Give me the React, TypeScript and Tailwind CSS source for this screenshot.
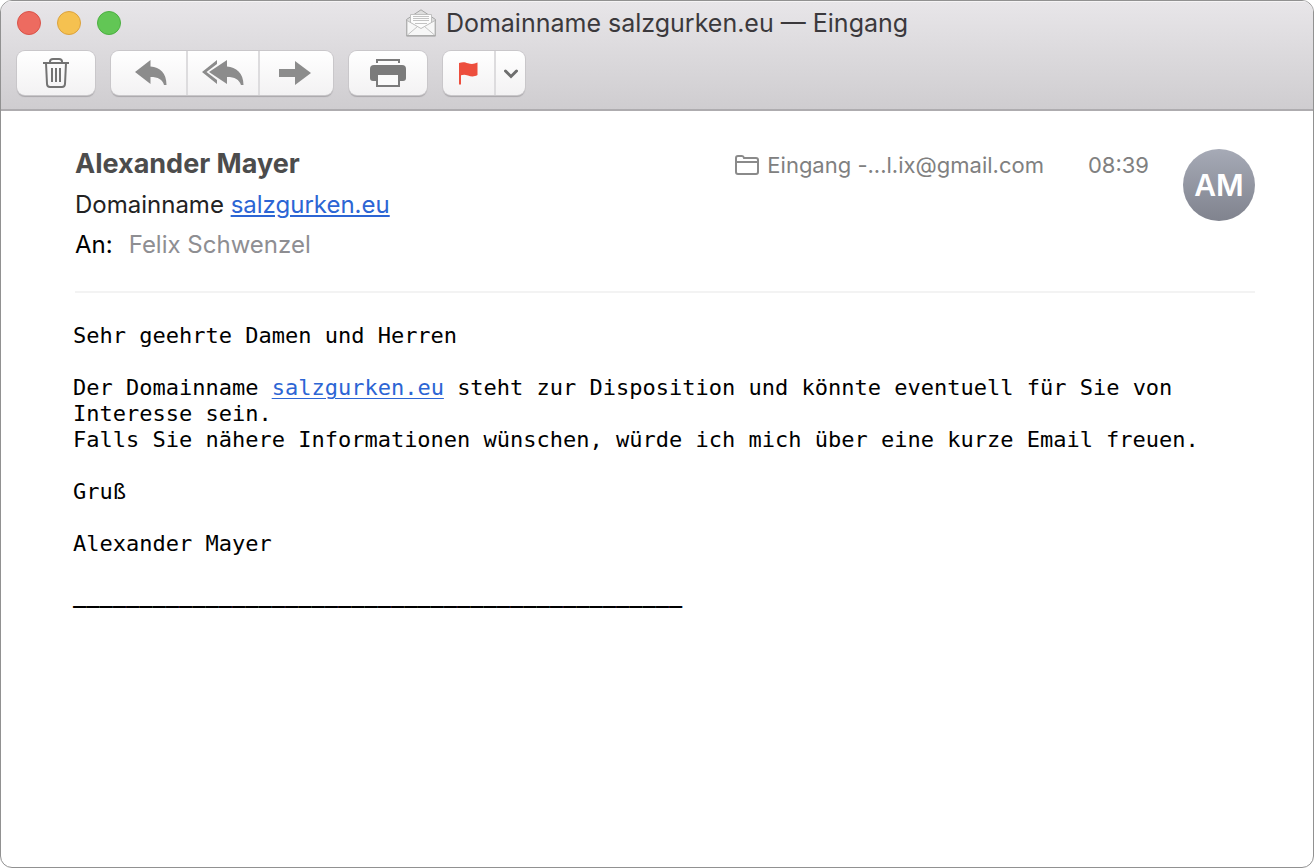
import type { ReactNode } from "react";

const toolButton =
  "flex h-11 items-center justify-center bg-linear-to-b from-white to-[#f3f2f3] active:from-[#e6e5e6] active:to-[#dddcdd]";

function ButtonGroup({ children }: { children: ReactNode }) {
  return (
    <div className="flex divide-x-2 divide-[#dddcde] overflow-hidden rounded-lg shadow-[0_0_0_1px_#c9c7ca,0_2px_1px_#a9a7aa]">
      {children}
    </div>
  );
}

function TrashIcon() {
  return (
    <svg width="28" height="32" viewBox="0 0 28 32" fill="none" stroke="#737373" strokeWidth="2" aria-hidden="true">
      <path d="M1 6H27" />
      <path d="M8 5V4.500Q8 2 11 2H17Q20 2 20 4.500V5" />
      <path d="M4 6L5 27Q5.200 30 8 30H20Q22.800 30 23 27L24 6" />
      <path d="M10 11V25M14 11V25M18 11V25" />
    </svg>
  );
}

function ReplyIcon() {
  return (
    <svg width="32" height="26" viewBox="0 0 32 26" fill="#8c8c8c" aria-hidden="true">
      <path d="M0 12L15.500 0V6.500C25 7 31.500 13 31.500 25H29C27.500 19.500 23 17 15.500 17V24Z" />
    </svg>
  );
}

function ReplyAllIcon() {
  return (
    <svg width="42" height="26" viewBox="0 0 42 26" fill="#8c8c8c" aria-hidden="true">
      <path d="M0 12L15 0V4L4.500 12L15 20V24Z" />
      <path d="M7 12L25 0V6.500C34 7 41.500 13 41.500 25H39C37 19.500 33 17 25 17V24Z" />
    </svg>
  );
}

function ForwardIcon() {
  return (
    <svg width="32" height="24" viewBox="0 0 32 24" fill="#8c8c8c" aria-hidden="true">
      <path d="M0 8H16V0L32 12L16 24V16H0Z" />
    </svg>
  );
}

function PrintIcon() {
  return (
    <svg width="36" height="28" viewBox="0 0 36 28" aria-hidden="true">
      <path d="M7 4V1H29V4" fill="none" stroke="#7b7b7b" strokeWidth="2" />
      <path d="M4 6H32Q36 6 36 10V19Q36 22 33 22H3Q0 22 0 19V10Q0 6 4 6Z" fill="#7b7b7b" />
      <path d="M5 13H31V22H5Z" fill="#7b7b7b" />
      <path d="M7 15H29V27H7Z" fill="#fafafa" stroke="#7b7b7b" strokeWidth="2" />
    </svg>
  );
}

function FlagIcon() {
  return (
    <svg width="19" height="23" viewBox="0 0 19 23" fill="#ed4e3d" aria-hidden="true">
      <path d="M0 1C4 -0.500 6 0.200 9 1.200C12 2.200 15 2.200 18.500 0.500V13C15 15 12 14.500 9 13.500C6 12.500 4.500 12.500 2 13.300V22.500H0Z" />
    </svg>
  );
}

function ChevronIcon() {
  return (
    <svg width="16" height="12" viewBox="0 0 16 12" fill="none" stroke="#6e6e6e" strokeWidth="3" aria-hidden="true">
      <path d="M2.500 4L8 9.500L13.500 4" strokeLinecap="round" />
    </svg>
  );
}

function EnvelopeIcon() {
  return (
    <svg width="30" height="28" viewBox="0 0 30 28" aria-hidden="true">
      <path d="M0.500 10.500L15 0.800L29.500 10.500V26.500H0.500Z" fill="#dedede" stroke="#a5a5a5" />
      <path d="M4.500 5.500H25.500V14L15 21L4.500 14Z" fill="#fcfcfc" stroke="#c0c0c0" />
      <path d="M7 7.500H23M7 9.500H23M7 11.500H23M9 14.500H21" stroke="#c3c3c3" />
      <path d="M1 11.500L15 19.500L29 11.500V26.500H1Z" fill="#f7f7f7" stroke="#bdbdbd" />
      <path d="M1.500 26L11.500 17.500M28.500 26L18.500 17.500" stroke="#c4c4c4" />
      <path d="M0.500 27H29.500" stroke="#999999" />
    </svg>
  );
}

function FolderIcon() {
  return (
    <svg width="24" height="20" viewBox="0 0 24 20" fill="none" stroke="#8a8a8a" strokeWidth="2" aria-hidden="true">
      <path d="M1 17V3Q1 1 3 1H7Q8.500 1 9 3H21Q23 3 23 5V17Q23 19 21 19H3Q1 19 1 17ZM1 7H23" />
    </svg>
  );
}

export default function App() {
  return (
    <div className="flex min-h-screen flex-col overflow-hidden rounded-xl border border-[#919191] bg-white font-['Inter','Liberation_Sans',sans-serif]">
      <header className="border-b-2 border-[#aeacaf] bg-linear-to-b from-[#e8e6e9] to-[#cfcdd0] px-4 pb-3.5 shadow-[inset_0_1px_0_#f5f4f5]">
        <div className="grid h-11 grid-cols-[1fr_auto_1fr] items-center">
          <div className="flex gap-4">
            <button aria-label="Schließen" className="size-6 rounded-full border border-[#d95349] bg-[#ed6b60]" />
            <button aria-label="Minimieren" className="size-6 rounded-full border border-[#dba23d] bg-[#f5c150]" />
            <button aria-label="Vollbild" className="size-6 rounded-full border border-[#4caf41] bg-[#62c655]" />
          </div>
          <h1 className="flex items-center gap-2.5 text-[25px] leading-8 text-[#3b393c]">
            <EnvelopeIcon />
            Domainname salzgurken.eu — Eingang
          </h1>
        </div>
        <div className="flex gap-4 pt-1.5">
          <ButtonGroup>
            <button aria-label="Löschen" className={`${toolButton} w-[78px]`}>
              <TrashIcon />
            </button>
          </ButtonGroup>
          <ButtonGroup>
            <button aria-label="Antworten" className={`${toolButton} w-[77px] pl-1`}>
              <ReplyIcon />
            </button>
            <button aria-label="Allen antworten" className={`${toolButton} w-[72px]`}>
              <ReplyAllIcon />
            </button>
            <button aria-label="Weiterleiten" className={`${toolButton} w-[73px] pr-1`}>
              <ForwardIcon />
            </button>
          </ButtonGroup>
          <ButtonGroup>
            <button aria-label="Drucken" className={`${toolButton} w-[78px]`}>
              <PrintIcon />
            </button>
          </ButtonGroup>
          <ButtonGroup>
            <button aria-label="Markieren" className={`${toolButton} w-[53px]`}>
              <FlagIcon />
            </button>
            <button aria-label="Markierung wählen" className={`${toolButton} w-[29px]`}>
              <ChevronIcon />
            </button>
          </ButtonGroup>
        </div>
      </header>

      <main className="px-[58px] pt-9">
        <section className="ml-4 flex items-start justify-between border-b-2 border-[#f3f3f3] pb-[26px]">
          <div className="text-2xl leading-10">
            <h2 className="mb-1 text-[27px] leading-[34px] font-bold text-[#4c4c4c]">Alexander Mayer</h2>
            <p className="text-[#222222]">
              Domainname{" "}
              <a href="#salzgurken" className="text-[#2c65d4] underline decoration-2 underline-offset-2">
                salzgurken.eu
              </a>
            </p>
            <p className="flex gap-4 text-black">
              An: <span className="text-[#8e8e92]">Felix Schwenzel</span>
            </p>
          </div>
          <div className="flex items-start">
            <div className="flex items-center gap-2 pt-0.5 text-[22px] leading-8 text-[#808080]">
              <FolderIcon />
              <span>Eingang -...l.ix@gmail.com</span>
              <time className="ml-9">08:39</time>
            </div>
            <div className="mt-0.5 ml-[34px] flex size-[72px] items-center justify-center rounded-full bg-linear-to-b from-[#a6aab6] to-[#80838e] text-[30px] font-semibold text-white">
              AM
            </div>
          </div>
        </section>

        <article className="ml-3.5 pt-[30px] font-['DejaVu_Sans_Mono','Liberation_Mono',monospace] text-[22px] leading-[26px] text-black">
          <p>Sehr geehrte Damen und Herren</p>
          <p className="pt-[26px]">
            Der Domainname{" "}
            <a href="#salzgurken" className="text-[#2c65d4] underline decoration-1 underline-offset-3">
              salzgurken.eu
            </a>{" "}
            steht zur Disposition und könnte eventuell für Sie von Interesse sein.
          </p>
          <p>Falls Sie nähere Informationen wünschen, würde ich mich über eine kurze Email freuen.</p>
          <p className="pt-[26px]">Gruß</p>
          <p className="pt-[26px]">Alexander Mayer</p>
          <p className="pt-[26px] font-bold">______________________________________________</p>
        </article>
      </main>
    </div>
  );
}
